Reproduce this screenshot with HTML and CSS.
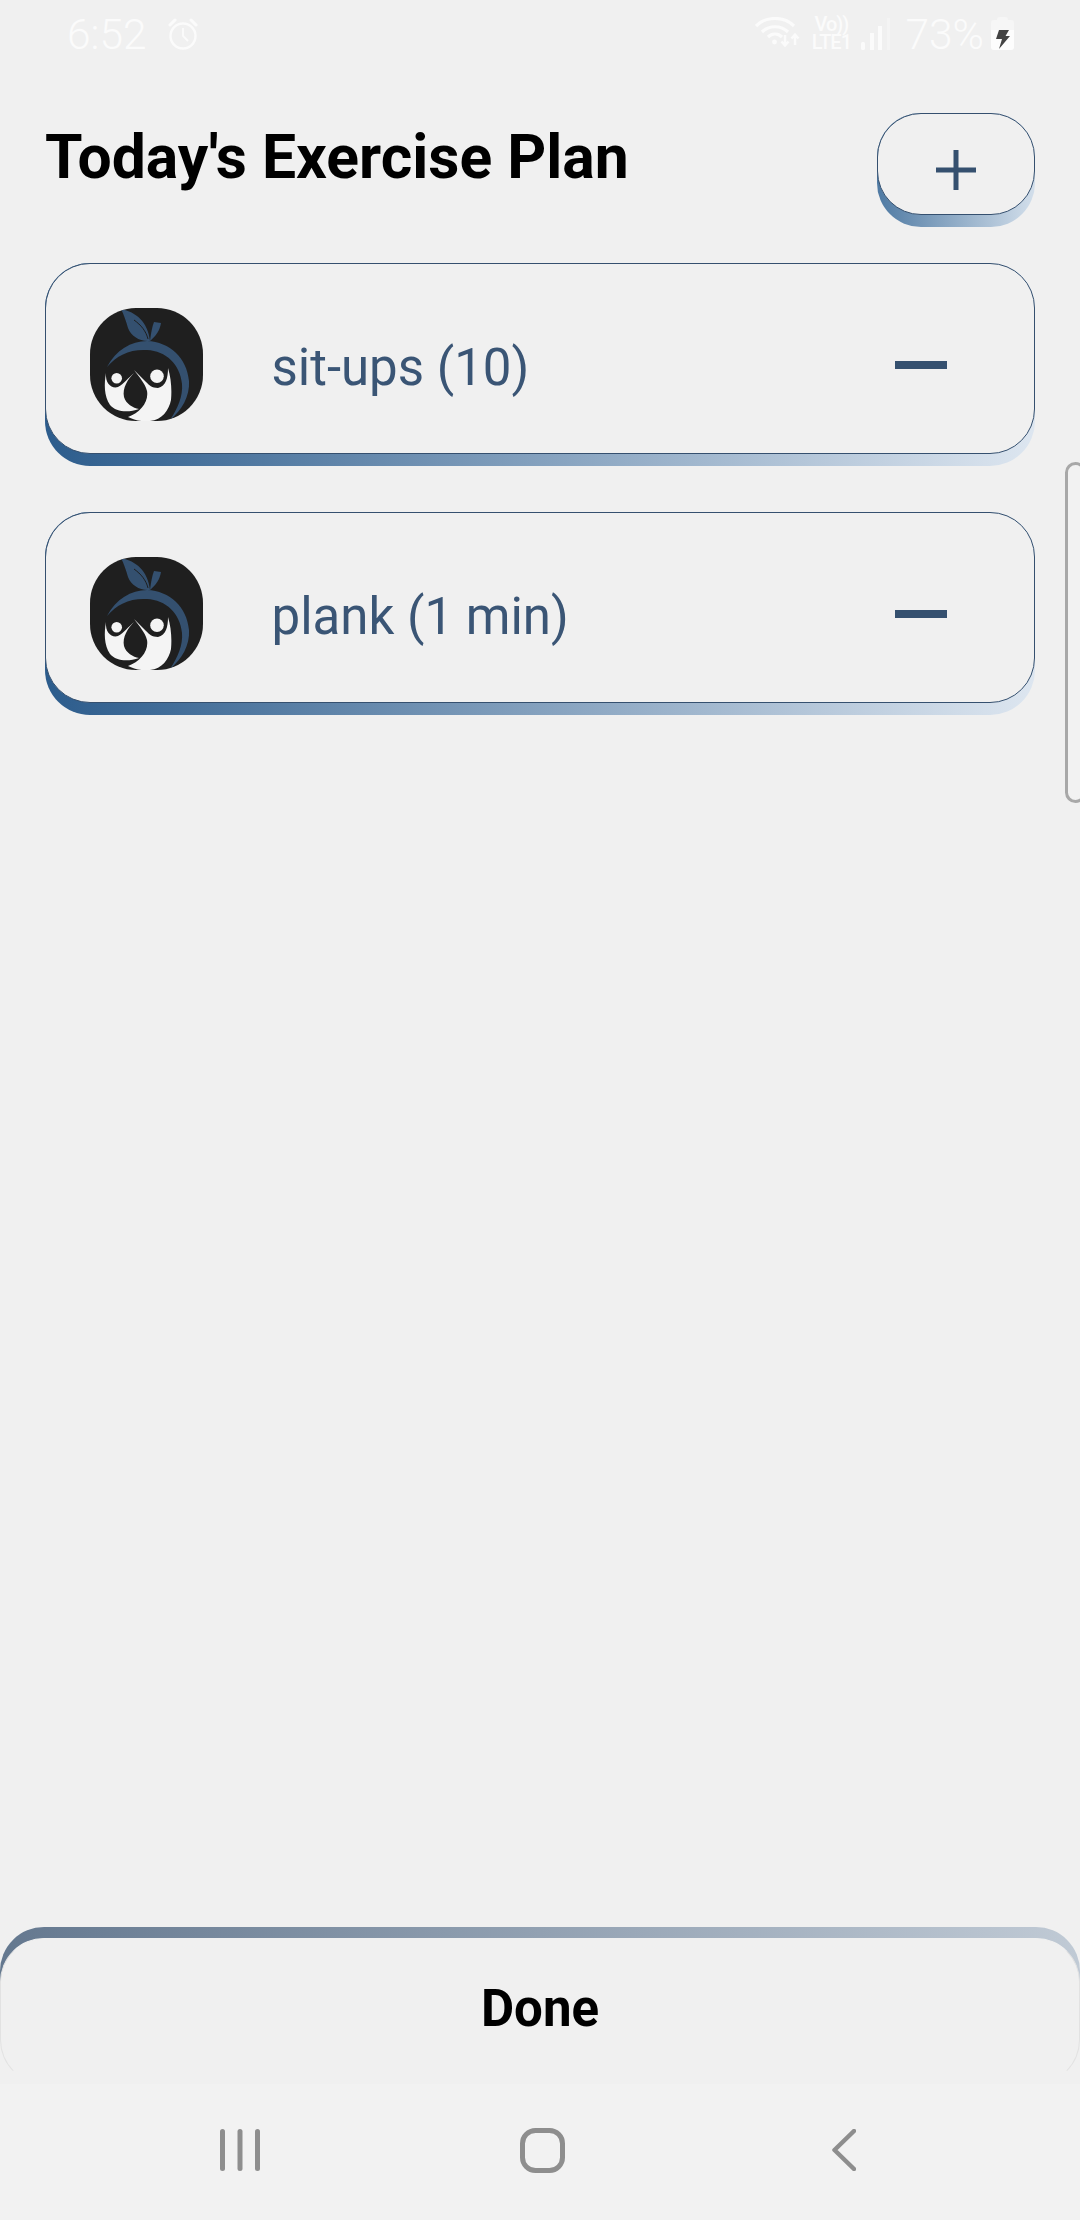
FILE: index.html
```html
<!DOCTYPE html>
<html lang="en">
<head>
    <meta charset="UTF-8">
    <meta name="viewport" content="width=device-width, initial-scale=1.0">
    <title>Today's Exercise Plan</title>
    <link rel="stylesheet" href="styles.css">
</head>
<body>
    <svg class="svg-defs" width="0" height="0" aria-hidden="true">
        <defs>
            <clipPath id="logoClip"><rect width="113" height="113" rx="46" ry="46"/></clipPath>
            <symbol id="logo" viewBox="0 0 113 113">
                <g clip-path="url(#logoClip)">
                    <rect width="113" height="113" fill="#1f1f1f"/>
                    <path fill="#34506f" d="M31 1 C46 4 58 14 60 33 C50 34 41 28 38 20 C36 13 34 7 31 1 Z"/>
                    <path fill="none" stroke="#1f1f1f" stroke-width="1" d="M44 12 C51 17 56 23 58 31"/>
                    <path fill="#34506f" d="M60 33 C61 25 62 19 64 14 L71 15 C70 22 66 28 60 33 Z"/>
                    <path fill="#34506f" d="M17 59 C26 42 41 33 57 33 C80 34 97 50 99 73 C100 88 92 102 80 112 C88 100 93 88 92 76 C90 56 76 43 57 42 C40 41 27 47 17 59 Z"/>
                    <path fill="#f4f4f4" d="M16 65 C14 76 14 88 20 97 C26 104 38 105 49 101 C43 100 36 96 34 89 C32 80 38 71 44 65 C38 70 34 76 28 79 C22 81 15 76 16 65 Z"/>
                    <path fill="#f4f4f4" d="M44 62 C49 69 55 75 57 83 C59 94 50 105 38 109 C44 112 52 114 60 113 C72 112 79 102 81 92 C82 81 81 70 78 60 C78 70 76 78 68 80 C62 80 59 77 56 74 C52 70 48 66 44 62 Z"/>
                    <circle fill="#f4f4f4" cx="26.7" cy="70.3" r="5.3"/>
                    <circle fill="#f4f4f4" cx="67" cy="68.3" r="6.8"/>
                </g>
            </symbol>
        </defs>
    </svg>

    <div class="page">
        <div class="status-bar">
            <span class="clock">6:52</span>
            <svg class="alarm" width="32" height="33" viewBox="0 0 32 33" fill="none" stroke="#fbfbfb" stroke-width="2.4">
                <circle cx="16" cy="18" r="12.5"/>
                <path d="M16 10 V18 L21 23" stroke-width="1.8"/>
                <path d="M3 7 L8 2 M29 7 L24 2" stroke-linecap="round" stroke-width="3"/>
            </svg>
            <div class="status-right">
                <svg class="wifi" width="46" height="30" viewBox="0 0 46 30" fill="none" stroke="#fbfbfb" stroke-width="3.2">
                    <path d="M1 9 C11 -1 29 -1 39 9"/>
                    <path d="M7 15 C14 8 26 8 33 15"/>
                    <path d="M13 20 C17 16 23 16 27 20"/>
                    <circle cx="19.500" cy="25" r="2.400" fill="#fbfbfb" stroke="none"/>
                    <path d="M30 18 V28 M26.500 24.500 L30 28.500 L33.500 24.500 M40 28 V18 M36.500 21.500 L40 17.500 L43.500 21.500" stroke-width="2.400"/>
                </svg>
                <div class="network">
                    <span class="volte">Vo))</span>
                    <span class="lte">LTE1</span>
                </div>
                <svg class="signal" width="30" height="32" viewBox="0 0 30 32" fill="#fbfbfb">
                    <rect x="0" y="24" width="4" height="8" rx="1.500"/>
                    <rect x="9" y="15" width="4" height="17"/>
                    <rect x="17" y="8" width="4" height="24"/>
                    <rect x="26" y="0" width="3" height="32" opacity="0.4"/>
                </svg>
                <span class="battery-pct">73%</span>
                <svg class="battery" width="23" height="33" viewBox="0 0 23 33">
                    <path fill="#f6f6f6" d="M6 3 Q6 0 9 0 H14 Q17 0 17 3 H20 Q23 3 23 6 V13 H0 V6 Q0 3 3 3 Z"/>
                    <path fill="#fdfdfd" d="M0 13 H23 V30 Q23 33 20 33 H3 Q0 33 0 30 Z"/>
                    <path fill="#444444" d="M8 13 H18 L14.500 19 H19 L8 32 L11 22 H5 Z"/>
                </svg>
            </div>
        </div>

        <header class="title-row">
            <h1>Today's Exercise Plan</h1>
            <div class="add-btn">
                <div class="add-btn-face">
                    <svg width="40" height="40" viewBox="0 0 40 40" fill="#35506f">
                        <rect x="0" y="17.500" width="40" height="5"/>
                        <rect x="17.500" y="0" width="5" height="40"/>
                    </svg>
                </div>
            </div>
        </header>

        <main class="plan-list">
            <div class="plan-card">
                <div class="plan-card-face">
                    <svg class="plan-logo" width="113" height="113"><use href="#logo"/></svg>
                    <span class="plan-name">sit-ups (10)</span>
                    <span class="plan-remove"></span>
                </div>
            </div>
            <div class="plan-card">
                <div class="plan-card-face">
                    <svg class="plan-logo" width="113" height="113"><use href="#logo"/></svg>
                    <span class="plan-name">plank (1 min)</span>
                    <span class="plan-remove"></span>
                </div>
            </div>
        </main>

        <div class="done-btn">
            <div class="done-btn-face">Done</div>
        </div>

        <nav class="nav-bar">
            <svg width="40" height="42" viewBox="0 0 40 42" fill="#8e8e8e">
                <rect x="0" y="0" width="5" height="42" rx="2.500"/>
                <rect x="17.500" y="0" width="5" height="42" rx="2.500"/>
                <rect x="35" y="0" width="5" height="42" rx="2.500"/>
            </svg>
            <svg width="45" height="45" viewBox="0 0 45 45" fill="none" stroke="#8e8e8e" stroke-width="5">
                <rect x="2.500" y="2.500" width="40" height="40" rx="13"/>
            </svg>
            <svg width="24" height="42" viewBox="0 0 24 42" fill="none" stroke="#8e8e8e" stroke-width="4.500" stroke-linecap="round" stroke-linejoin="round">
                <path d="M22 2 L2.500 21 L22 40"/>
            </svg>
        </nav>

        <div class="edge-handle"></div>
    </div>
</body>
</html>
```

FILE: styles.css
```css
* {
    margin: 0;
    padding: 0;
    box-sizing: border-box;
}
body {
    background: #f0f0f0;
    font-family: Roboto, "Liberation Sans", sans-serif;
}
.svg-defs {
    display: block;
    height: 0;
}
.page {
    position: relative;
    width: 1080px;
    height: 2220px;
    display: flex;
    flex-direction: column;
    overflow: hidden;
}

/* status bar */
.status-bar {
    height: 70px;
    padding: 12px 66px 0 67px;
    display: flex;
    align-items: flex-start;
    color: #fbfbfb;
}
.clock {
    font-size: 42.5px;
    font-weight: 300;
    line-height: 46px;
}
.alarm {
    margin: 6px 0 0 20px;
}
.status-right {
    margin-left: auto;
    display: flex;
    align-items: flex-start;
}
.wifi {
    margin-top: 5px;
}
.network {
    width: 42px;
    margin: 3px 0 0 9px;
    display: flex;
    flex-direction: column;
    align-items: center;
    font-weight: 500;
    font-size: 20px;
    line-height: 18px;
    letter-spacing: -1px;
}
.signal {
    margin: 6px 0 0 9px;
}
.battery-pct {
    margin-left: 14px;
    font-size: 42.5px;
    font-weight: 300;
    line-height: 46px;
}
.battery {
    margin: 5px 0 0 7px;
}

/* title */
.title-row {
    padding: 43px 45px 0 45px;
    display: flex;
    justify-content: space-between;
    align-items: flex-start;
}
.title-row h1 {
    margin-top: 10px;
    font-size: 60.6px;
    font-weight: 700;
    line-height: 70px;
    color: #000000;
}
.add-btn {
    width: 158px;
    padding-bottom: 12px;
    border-radius: 44px;
    background: linear-gradient(90deg, #4f7aa3, #d3dfeb);
}
.add-btn-face {
    height: 102px;
    padding-top: 12px;
    display: flex;
    justify-content: center;
    align-items: center;
    background: #f0f0f0;
    border: 1.5px solid #35506f;
    border-radius: 44px;
}

/* exercise cards */
.plan-list {
    flex: 1;
    padding: 36px 45px 0;
    display: flex;
    flex-direction: column;
    gap: 46px;
}
.plan-card {
    padding-bottom: 12px;
    border-radius: 45px;
    background: linear-gradient(90deg, #2c5c8c, #dde6f0);
}
.plan-card-face {
    height: 191px;
    padding: 45px 87px 33px 45px;
    display: flex;
    align-items: center;
    background: #f0f0f0;
    border: 1.5px solid #35506f;
    border-radius: 45px;
}
.plan-logo {
    flex-shrink: 0;
    margin-left: -1.500px;
}
.plan-name {
    flex: 1;
    margin: 6px 0 0 69px;
    font-size: 51px;
    color: #3a5575;
}
.plan-remove {
    width: 52px;
    height: 8px;
    background: #35506f;
}

/* done button */
.done-btn {
    padding-top: 11px;
    border-radius: 44px;
    background: linear-gradient(90deg, #64788f, #c0cad5) top / 100% 70px no-repeat;
}
.done-btn-face {
    height: 146px;
    padding-bottom: 5px;
    display: flex;
    justify-content: center;
    align-items: center;
    background: #f0f0f0;
    border: 1px solid #e2e2e2;
    border-top-color: #f0f0f0;
    border-bottom-color: #f0f0f0;
    border-radius: 44px;
    font-size: 51px;
    font-weight: 700;
    color: #000000;
}

/* system nav */
.nav-bar {
    height: 136px;
    padding: 0 0 4px 89px;
    background: #f2f2f2;
    display: grid;
    grid-template-columns: repeat(3, 302px);
    justify-items: center;
    align-items: center;
}

/* peek handle on the right edge */
.edge-handle {
    position: absolute;
    top: 462px;
    right: -6px;
    width: 21px;
    height: 341px;
    background: #f2f2f2;
    border: 3px solid #a8a8a8;
    border-radius: 12px;
}
```
